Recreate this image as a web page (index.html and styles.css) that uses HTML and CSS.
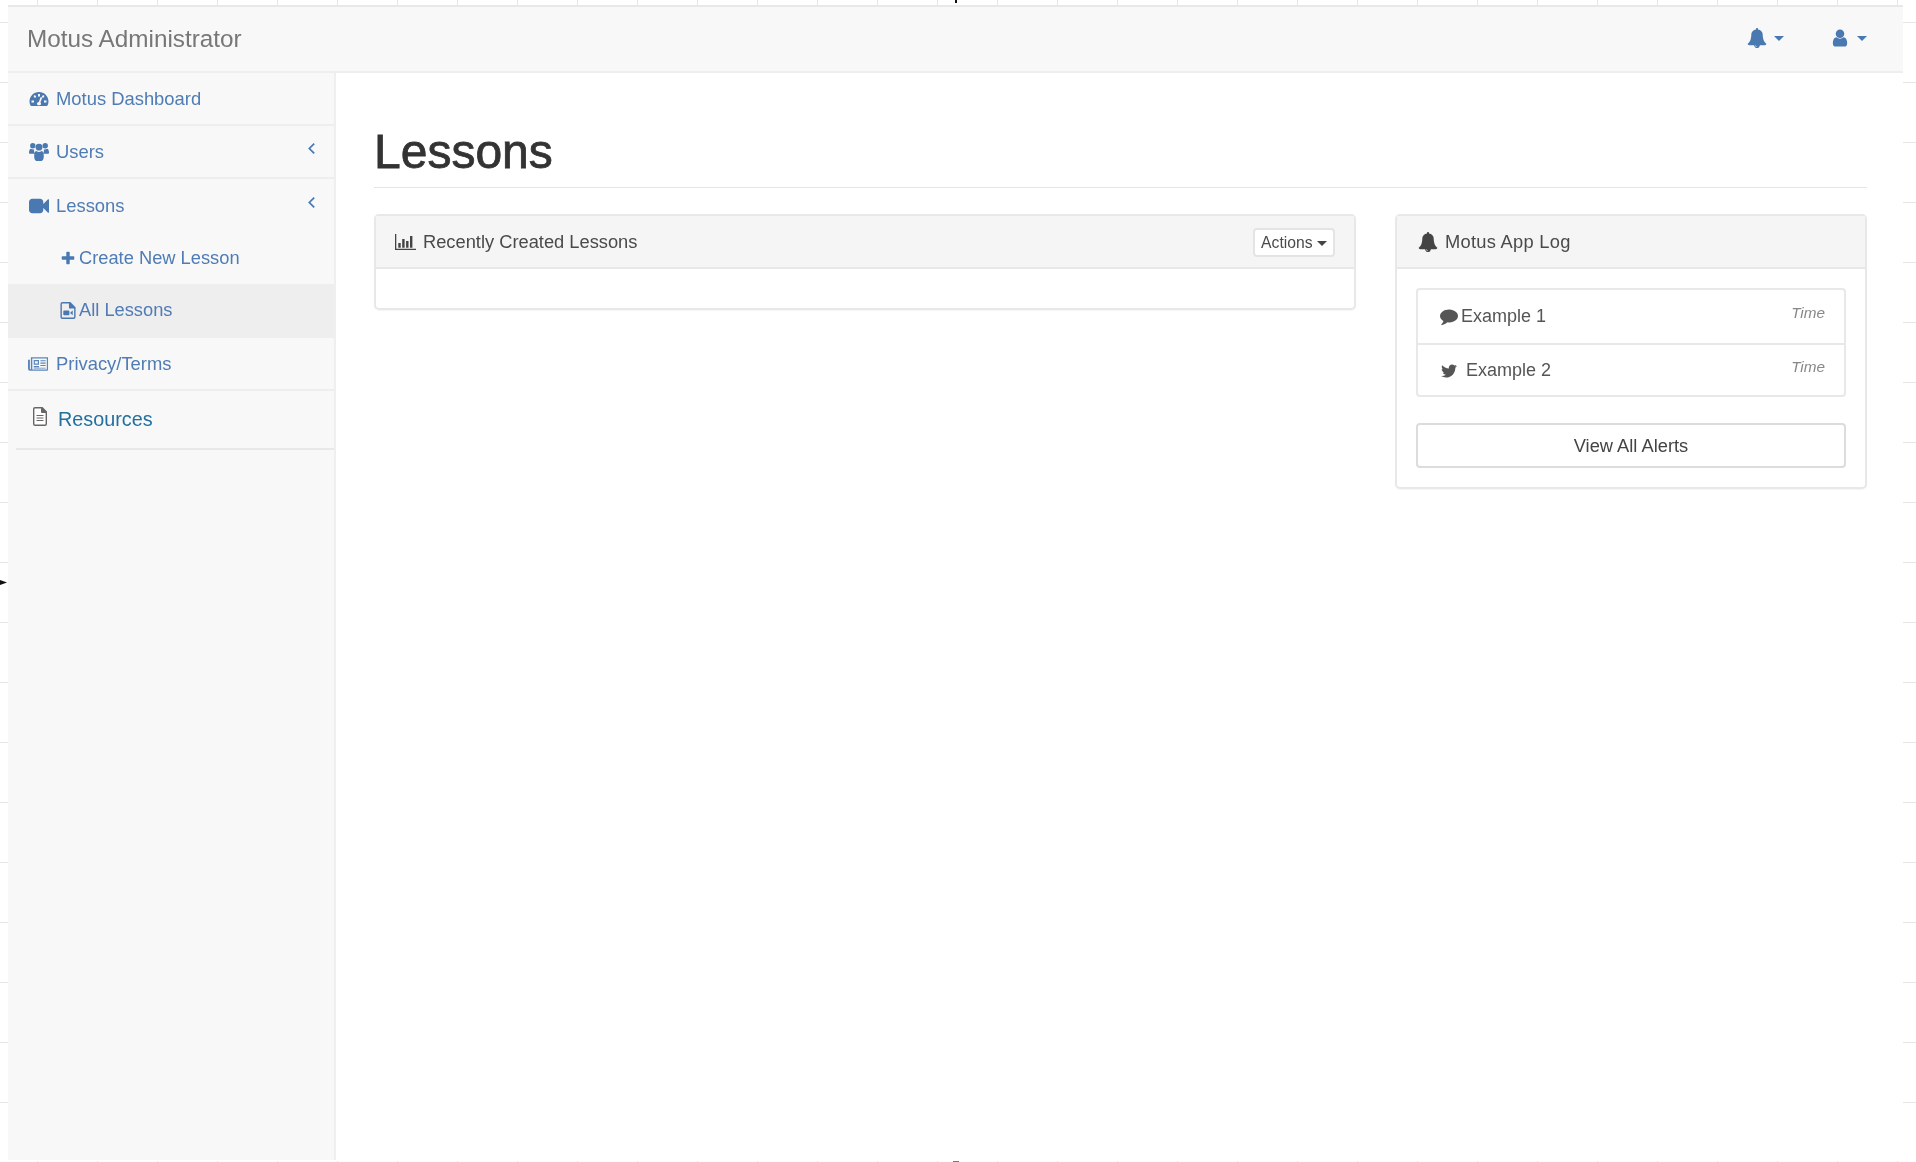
FILE: index.html
```html
<!DOCTYPE html>
<html lang="en">
<head>
    <meta charset="UTF-8">
    <title>Motus Administrator</title>
    <link rel="stylesheet" href="styles.css">
</head>
<body>

    <span class="tick tick-top"></span>
    <span class="tick tick-left"></span>
    <span class="tick tick-bottom"></span>

    <div class="frame">
        <nav class="navbar">
            <span class="brand">Motus Administrator</span>
            <div class="nav-right">
                <a class="nav-drop" href="#">
                    <svg class="nav-icon" viewBox="0 0 1792 1792"><path d="M912 1696q0-16-16-16-59 0-101.5-42.5t-42.5-101.5q0-16-16-16t-16 16q0 73 51.5 124.5t124.5 51.5q16 0 16-16zm816-288q0 52-38 90t-90 38h-448q0 106-75 181t-181 75-181-75-75-181h-448q-52 0-90-38t-38-90q50-42 91-88t85-119.5 74.5-158.5 50-206 19.5-260q0-152 117-282.5t307-158.5q-8-19-8-39 0-40 28-68t68-28 68 28 28 68q0 20-8 39 190 28 307 158.5t117 282.5q0 139 19.5 260t50 206 74.5 158.5 85 119.5 91 88z"/></svg>
                    <span class="caret"></span>
                </a>
                <a class="nav-drop" href="#">
                    <svg class="nav-icon" viewBox="0 0 1792 1792"><path d="M1536 1399q0 109-62.5 187t-150.5 78h-854q-88 0-150.5-78t-62.5-187q0-85 8.5-160.5t31.5-152 58.5-131 94-89 134.5-34.5q131 128 313 128t313-128q76 0 134.5 34.5t94 89 58.5 131 31.5 152 8.5 160.5zm-256-887q0 159-112.5 271.5t-271.5 112.5-271.5-112.5-112.5-271.5 112.5-271.5 271.5-112.5 271.5 112.5 112.5 271.5z"/></svg>
                    <span class="caret"></span>
                </a>
            </div>
        </nav>

        <div class="layout">
            <aside class="sidebar">
                <a class="side-item line" href="#">
                    <svg class="side-icon" viewBox="0 0 20 20"><path fill-rule="evenodd" d="M10 3C4.700 3 .5 7.200 .5 12.500c0 1.500.3 2.700.9 3.800.2.400.6.700 1.100.7h15c.5 0 .9-.3 1.100-.7.600-1.100.9-2.300.9-3.800C19.500 7.200 15.300 3 10 3zM9 5h2v2.500H9zM4.500 6.900l1.500-1 1.300 2-1.500 1zM14 5.900l1.500 1-1.300 2-1.500-1zM2.500 11.500h2.500v2H2.500zM15 11.500h2.500v2H15zM11.700 8l1.600.8-1.900 4.500c.4.400.6.900.6 1.400 0 1.100-.9 1.600-2 1.600s-2-.5-2-1.600c0-1 .8-1.700 1.800-1.800z"/></svg>
                    Motus Dashboard
                </a>
                <a class="side-item line" href="#">
                    <svg class="side-icon" viewBox="0 0 20 20"><circle cx="3.800" cy="3.800" r="2.700"/><circle cx="16.200" cy="3.800" r="2.700"/><circle cx="10" cy="5.200" r="3.400"/><path d="M0 10.500c0-2.500 1-3.800 2-3.800 .8.700 2 1 3.200.6-.3 1.500-.1 3.200.7 4.500H1c-.6 0-1-.4-1-1.300zM20 10.500c0-2.500-1-3.800-2-3.800-.8.700-2 1-3.200.6.300 1.500.1 3.200-.7 4.500H19c.6 0 1-.4 1-1.300zM5.200 14c0-3.200 1-5 2.200-5 1.500 1.400 3.700 1.400 5.200 0 1.200 0 2.200 1.800 2.200 5 0 2.500-.6 5-2.800 5H8c-2.200 0-2.800-2.500-2.800-5z"/></svg>
                    Users
                    <svg class="chevron" viewBox="0 0 8 12"><polyline points="6.500,1.500 2,6 6.500,10.500"/></svg>
                </a>
                <a class="side-item" href="#">
                    <svg class="side-icon" viewBox="0 0 1792 1792"><path d="M1792 352v1088q0 42-39 59-13 5-25 5-27 0-45-19l-403-403v166q0 119-84.500 203.500t-203.500 84.500h-704q-119 0-203.500-84.500t-84.500-203.500v-704q0-119 84.500-203.500t203.500-84.500h704q119 0 203.500 84.500t84.500 203.500v165l403-402q18-19 45-19 12 0 25 5 39 17 39 59z"/></svg>
                    Lessons
                    <svg class="chevron" viewBox="0 0 8 12"><polyline points="6.500,1.500 2,6 6.500,10.500"/></svg>
                </a>
                <a class="side-item sub" href="#">
                    <svg class="sub-icon" viewBox="0 0 1792 1792"><path d="M1600 736v192q0 40-28 68t-68 28h-416v416q0 40-28 68t-68 28h-192q-40 0-68-28t-28-68v-416h-416q-40 0-68-28t-28-68v-192q0-40 28-68t68-28h416v-416q0-40 28-68t68-28h192q40 0 68 28t28 68v416h416q40 0 68 28t28 68z"/></svg>
                    Create New Lesson
                </a>
                <a class="side-item sub active" href="#">
                    <svg class="sub-icon" viewBox="0 0 16 18"><path fill-rule="evenodd" d="M2 0h8.500L16 5.500V16a2 2 0 0 1-2 2H2a2 2 0 0 1-2-2V2a2 2 0 0 1 2-2zM1.500 2v14c0 .3.200.5.500.5h12c.3 0 .5-.2.500-.5V7H10a1 1 0 0 1-1-1V1.500H2c-.3 0-.5.200-.5.500z"/><path d="M4 9h4.500a1 1 0 0 1 1 1v3a1 1 0 0 1-1 1H4a1 1 0 0 1-1-1v-3a1 1 0 0 1 1-1zM10.500 11l2.500-2v5l-2.500-2z"/></svg>
                    All Lessons
                </a>
                <a class="side-item line" href="#">
                    <svg class="news-icon" viewBox="0 0 22 16"><path fill-rule="evenodd" d="M1.500 1H21v13a1 1 0 0 1-1 1H2a2 2 0 0 1-2-2V3.500h2V13c0 .4.200.6.500.6h.2c.3 0 .3-.2.300-.6V1zM4.500 2.300v11.400h15.200V2.300z"/><path fill-rule="evenodd" d="M6 3.800h5.500v5H6zM7.200 5v2.600h3.100V5z"/><path d="M13 4h5.500v1.200H13zM13 6.500h5.500v1.200H13zM13 9h5.500v1.200H13zM6 10.200h5.500v1.200H6zM6 12h12.500v.8H6z"/></svg>
                    Privacy/Terms
                </a>
                <div class="resources">
                    <a class="resources-link" href="#">
                        <svg class="file-icon" viewBox="0 0 14 19"><path fill="#fff" d="M1 1h8l4.500 4.500V18H1z"/><path fill-rule="evenodd" d="M2 0h7.500L14 4.500V17a2 2 0 0 1-2 2H2a2 2 0 0 1-2-2V2a2 2 0 0 1 2-2zM1.400 2v15c0 .4.200.6.600.6h10c.4 0 .6-.2.600-.6V6H9a1 1 0 0 1-1-1V1.400H2c-.4 0-.6.200-.6.600z"/><path d="M3.500 8h7v1.100h-7zM3.500 10.500h7v1.100h-7zM3.500 13h7v1.100h-7z"/></svg>
                        Resources
                    </a>
                </div>
            </aside>

            <main class="content">
                <h1 class="page-title">Lessons</h1>

                <div class="columns">
                    <section class="panel panel-wide">
                        <div class="panel-heading">
                            <svg class="head-icon" viewBox="0 0 21 16"><path d="M0 0h1.300v14.700H21V16H0zM3.300 9h2.400v4.700H3.300zM7.200 5h2.400v8.700H7.200zM11.100 7h2.400v6.700h-2.400zM15 2h2.400v11.700H15z"/></svg>
                            Recently Created Lessons
                            <button class="btn-actions">Actions <span class="caret caret-dark"></span></button>
                        </div>
                        <div class="panel-body-empty"></div>
                    </section>

                    <section class="panel panel-side">
                        <div class="panel-heading">
                            <svg class="head-icon bell" viewBox="0 0 1792 1792"><path d="M912 1696q0-16-16-16-59 0-101.5-42.5t-42.5-101.5q0-16-16-16t-16 16q0 73 51.5 124.5t124.5 51.5q16 0 16-16zm816-288q0 52-38 90t-90 38h-448q0 106-75 181t-181 75-181-75-75-181h-448q-52 0-90-38t-38-90q50-42 91-88t85-119.5 74.5-158.5 50-206 19.5-260q0-152 117-282.5t307-158.5q-8-19-8-39 0-40 28-68t68-28 68 28 28 68q0 20-8 39 190 28 307 158.5t117 282.5q0 139 19.5 260t50 206 74.5 158.5 85 119.5 91 88z"/></svg>
                            <span class="log-title">Motus App Log</span>
                        </div>
                        <div class="panel-body">
                            <ul class="log-list">
                                <li class="log-item">
                                    <svg class="log-icon" viewBox="0 0 1792 1792"><path d="M1792 896q0 174-120 321.500t-326 233-450 85.500q-70 0-145-8-198 175-460 242-49 14-114 22-17 2-30.500-9t-17.500-29v-1q-3-4-.5-12t2-10 4.500-9.500l6-9 7-8.500 8-9q7-8 31-34.500t34.500-38 31-39.500 32.500-51 27-59 26-76q-157-89-247.500-220t-90.500-281q0-130 71-248.500t191-204.500 286-136.500 348-50.500q244 0 450 85.500t326 233 120 321.500z"/></svg>
                                    <span class="log-text-tight">Example 1</span>
                                    <em class="log-time">Time</em>
                                </li>
                                <li class="log-item">
                                    <svg class="log-icon" viewBox="0 0 1792 1792"><path d="M1684 408q-67 98-162 167 1 14 1 42 0 130-38 259.500t-115.500 248.500-184.500 210.500-258 146-323 54.500q-271 0-496-145 35 4 78 4 225 0 401-138-105-2-188-64.500t-114-159.500q33 5 61 5 43 0 85-11-112-23-185.500-111.500t-73.500-205.500v-4q68 38 146 41-66-44-105-115t-39-154q0-88 44-163 121 149 294.500 238.500t371.500 99.500q-8-38-8-74 0-134 94.500-228.500t228.500-94.500q140 0 236 102 109-21 205-78-37 115-142 178 92-10 184-50z"/></svg>
                                    <span class="log-text">Example 2</span>
                                    <em class="log-time">Time</em>
                                </li>
                            </ul>
                            <a class="btn-alerts" href="#">View All Alerts</a>
                        </div>
                    </section>
                </div>
            </main>
        </div>
    </div>

</body>
</html>
```

FILE: styles.css
```css
* {
    box-sizing: border-box;
}
html, body {
    height: 100%;
}
body {
    margin: 0;
    height: 1162px;
    overflow: hidden;
    padding: 5px 13px 1px 8px;
    font-family: "Liberation Sans", Arial, sans-serif;
    font-size: 18.3px;
    color: #444;
    background-color: #fff;
    background-image:
        linear-gradient(to right, #e6e6e6 1px, transparent 1px),
        linear-gradient(to bottom, #e6e6e6 1px, transparent 1px);
    background-size: 60px 100%, 100% 60px;
    background-position: 37px 0, 0 22px;
}
a {
    text-decoration: none;
}

/* marks left over at the edges of the capture */
.tick {
    position: absolute;
    background: #111;
}
.tick-top {
    left: 955px;
    top: 0;
    width: 2px;
    height: 3px;
}
.tick-left {
    left: 0;
    top: 580px;
    width: 7px;
    height: 5px;
    clip-path: polygon(0 0, 100% 50%, 0 100%);
}
.tick-bottom {
    left: 953px;
    top: 1161px;
    width: 6px;
    height: 1px;
    background: #777;
}

.frame {
    height: 100%;
    display: flex;
    flex-direction: column;
    background: #fff;
    border-top: 2px solid #e8e8e8;
    border-bottom: 1px solid #fff;
    filter: blur(.4px);
}

/* top bar */
.navbar {
    height: 66px;
    flex: none;
    display: flex;
    align-items: center;
    justify-content: space-between;
    padding: 0 36px 0 19px;
    background: #f8f8f8;
    border-bottom: 2px solid #eeeeee;
}
.brand {
    font-size: 24.3px;
    color: #777;
}
.nav-right {
    display: flex;
    gap: 46px;
    margin-top: -2px;
}
.nav-drop {
    display: flex;
    align-items: center;
    gap: 7px;
}
.nav-icon {
    width: 20px;
    height: 20px;
    fill: #4a78b0;
}
.caret {
    display: inline-block;
    width: 0;
    height: 0;
    border-top: 5px solid #4a78b0;
    border-left: 5px solid transparent;
    border-right: 5px solid transparent;
}
.caret-dark {
    border-top-color: #444;
    vertical-align: 2px;
}

/* sidebar */
.layout {
    flex: 1;
    display: flex;
    min-height: 0;
}
.sidebar {
    width: 328px;
    flex: none;
    background: #f8f8f8;
    border-right: 2px solid #efefef;
}
.side-item {
    height: 53px;
    display: flex;
    align-items: center;
    padding-left: 21px;
    font-size: 18.4px;
    color: #4f7cb4;
}
.side-item.line {
    border-bottom: 2px solid #eeeeee;
}
.side-icon {
    width: 20px;
    height: 20px;
    margin-right: 7px;
    fill: #4a78b0;
}
.chevron {
    width: 9px;
    height: 13px;
    margin-left: auto;
    margin-right: 18px;
    margin-bottom: 6px;
    fill: none;
    stroke: #4a78b0;
    stroke-width: 1.6;
}
.side-item.sub {
    height: 52px;
    padding-left: 52px;
    font-size: 18.3px;
}
.side-item.sub.active {
    height: 54px;
    padding-bottom: 2px;
    background: #eeeeee;
}
.sub-icon {
    width: 16px;
    height: 17px;
    margin-right: 3px;
    fill: #4a78b0;
}
.news-icon {
    width: 21px;
    height: 16px;
    margin-left: -1px;
    margin-right: 7px;
    fill: #5a85ba;
}
.resources {
    margin-left: 8px;
    height: 59px;
    border-bottom: 2px solid #e8e8e8;
}
.resources-link {
    height: 100%;
    display: flex;
    align-items: center;
    padding-left: 17px;
    font-size: 19.8px;
    color: #23709e;
}
.file-icon {
    width: 14px;
    height: 19px;
    margin-right: 11px;
    margin-bottom: 6px;
    fill: #666;
}

/* main area */
.content {
    flex: 1;
    padding: 53px 36px 0 38px;
}
.page-title {
    margin: 0 0 26px;
    padding-bottom: 9px;
    font-size: 48px;
    line-height: 52px;
    font-weight: normal;
    color: #333;
    -webkit-text-stroke: .8px #333;
    border-bottom: 1px solid #e6e6e6;
}
.columns {
    display: flex;
    align-items: flex-start;
    justify-content: space-between;
}
.panel {
    background: #fff;
    border: 2px solid #e8e8e8;
    border-radius: 5px;
    box-shadow: 0 1px 1px rgba(0,0,0,.04);
}
.panel-wide {
    width: 982px;
}
.panel-side {
    width: 472px;
}
.panel-heading {
    height: 53px;
    display: flex;
    align-items: center;
    padding: 0 19px;
    background: #f5f5f5;
    border-bottom: 2px solid #e8e8e8;
    color: #4a4a4a;
}
.head-icon {
    width: 21px;
    height: 16px;
    margin-right: 7px;
    fill: #444;
}
.head-icon.bell {
    width: 20px;
    height: 20px;
    margin-left: 2px;
}
.log-title {
    letter-spacing: .28px;
}
.btn-actions {
    margin-left: auto;
    margin-top: 2px;
    width: 82px;
    height: 29px;
    padding: 0;
    font-family: inherit;
    font-size: 15.7px;
    color: #4a4a4a;
    background: #fff;
    border: 2px solid #e4e4e4;
    border-radius: 4px;
}
.panel-body-empty {
    height: 39px;
}
.panel-body {
    padding: 19px 19px 19px;
}
.log-list {
    list-style-type: none;
    margin: 0 0 26px;
    padding: 0;
    border: 2px solid #e8e8e8;
    border-radius: 4px;
}
.log-item {
    height: 52.5px;
    display: flex;
    align-items: center;
    padding: 0 19px 0 22px;
    font-size: 18px;
    color: #555;
}
.log-item + .log-item {
    border-top: 2px solid #e8e8e8;
    padding-top: 2px;
}
.log-icon {
    width: 18px;
    height: 18px;
    fill: #555;
}
.log-text-tight {
    margin-left: 3px;
}
.log-text {
    margin-left: 8px;
}
.log-time {
    margin-left: auto;
    margin-bottom: 7px;
    font-size: 15.3px;
    color: #888;
}
.btn-alerts {
    display: block;
    height: 45px;
    line-height: 41px;
    text-align: center;
    color: #444;
    background: #fff;
    border: 2px solid #dcdcdc;
    border-radius: 4px;
}
```
